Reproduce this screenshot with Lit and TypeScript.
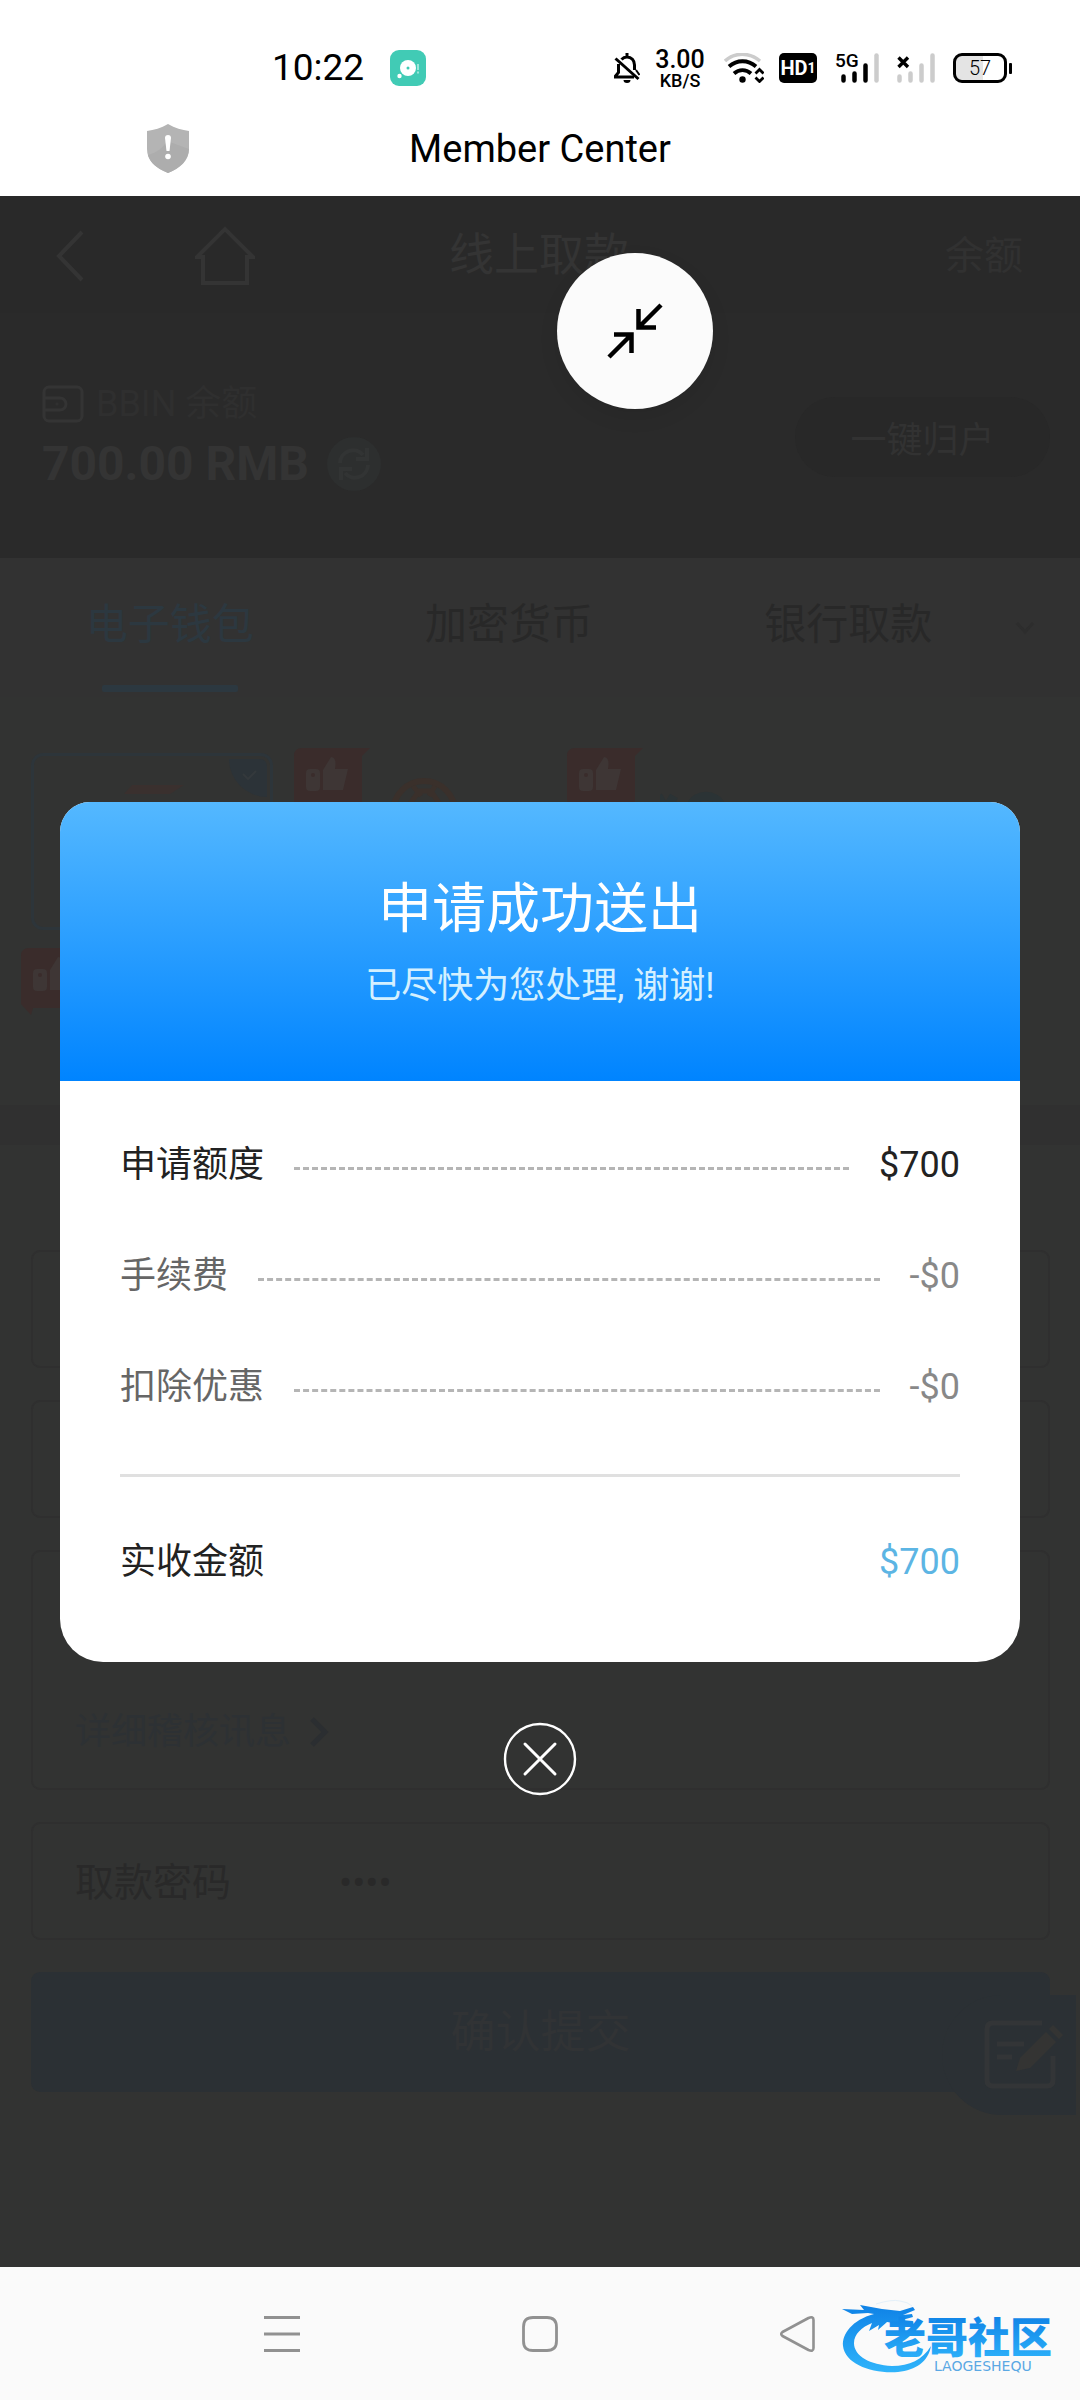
import { LitElement, html, css, svg, nothing } from "lit";
import { customElement, state } from "lit/decorators.js";

const FONT = css`Roboto, "Noto Sans CJK SC", sans-serif`;

/* ---------- Phone status bar ---------- */
@customElement("status-bar")
class StatusBar extends LitElement {
  static styles = css`
    :host {
      display: flex;
      align-items: center;
      justify-content: space-between;
      height: 110px;
      padding: 26px 68px 0 272px;
      box-sizing: border-box;
      background: #fff;
      color: #000;
      font-family: ${FONT};
    }
    .left,
    .right {
      display: flex;
      align-items: center;
    }
    .left {
      gap: 26px;
    }
    .time {
      font-size: 37px;
      line-height: 40px;
    }
    .rate {
      display: flex;
      flex-direction: column;
      align-items: center;
      font-weight: 500;
      margin: 0 18px 0 14px;
      width: 52px;
    }
    .speed {
      font-size: 25px;
      line-height: 25px;
    }
    .unit {
      font-size: 18px;
      line-height: 18px;
    }
    .wifi {
      margin-right: 15px;
    }
    .hd {
      display: flex;
      align-items: center;
      justify-content: center;
      width: 38px;
      height: 30px;
      border-radius: 5px;
      background: #000;
      color: #fff;
      font-size: 20px;
      font-weight: 700;
      margin-right: 18px;
    }
    .sim {
      font-size: 14px;
    }
    .sig {
      margin-right: 18px;
    }
    .battery {
      display: flex;
      align-items: center;
      gap: 2px;
    }
    .cell {
      display: flex;
      align-items: center;
      justify-content: center;
      width: 54px;
      height: 30px;
      box-sizing: border-box;
      border: 3px solid #000;
      border-radius: 9px;
      background: linear-gradient(90deg, #e4e4e4 57%, #fff 57%);
      font-size: 20px;
      font-weight: 300;
    }
    .tip {
      width: 3px;
      height: 11px;
      border-radius: 1px;
      background: #000;
    }
    svg {
      display: block;
    }
  `;

  render() {
    return html`
      <div class="left">
        <span class="time">10:22</span>
        <svg width="36" height="36" viewBox="0 0 36 36" aria-hidden="true">
          <rect width="36" height="36" rx="9" fill="#41cbb5" />
          <circle cx="18" cy="18" r="8" fill="#fff" />
          <circle cx="18" cy="18" r="1.5" fill="#41cbb5" />
          <circle cx="9.500" cy="26" r="2.200" fill="#fff" />
          <path d="M28 14v6M28 21.500v2" stroke="#b5ede3" stroke-width="1.600" />
        </svg>
      </div>
      <div class="right">
        <svg width="26" height="30" viewBox="0 0 26 30" fill="none" stroke="#000" stroke-width="3" aria-hidden="true">
          <path d="M13 0v4M7.500 6.500C9 4.800 11 4 13 4c4.500 0 7.500 3.500 7.500 8v5M4.500 11v8.500L1.500 23v1H20" />
          <path d="M1.500 5.500 24.500 26" />
          <path d="M22 17l3.500 5" stroke-width="2" />
          <path d="M9.500 27h7a3.500 3 0 0 1-7 0z" fill="#000" stroke="none" />
        </svg>
        <div class="rate"><span class="speed">3.00</span><span class="unit">KB/S</span></div>
        <svg class="wifi" width="40" height="30" viewBox="0 0 40 30" fill="none" stroke="#000" aria-hidden="true">
          <path d="M1 8C11-1 25-1 36 8" stroke="#ccc" stroke-width="3.500" />
          <path d="M5 13.500c8-7 19-7 27 0M10 20.500c5-4.500 12-4.500 17 0" stroke-width="3.800" />
          <circle cx="18.500" cy="26.500" r="3.200" fill="#000" stroke="none" />
          <path d="M31.500 20.500 35.500 16.500 39.500 20.500M31.500 24.500 35.500 28.500 39.500 24.500" stroke-width="2.800" />
        </svg>
        <div class="hd"><span>HD</span><span class="sim">1</span></div>
        <svg class="sig" width="44" height="46" viewBox="0 -8 44 46" aria-hidden="true">
          <g stroke-width="4.500" stroke-linecap="round">
            <path d="M8.500 23.500v4M19.500 20.500v7M30.500 12.500v15" stroke="#000" />
            <path d="M41.500 2.500v25" stroke="#ccc" />
          </g>
          <text x="0" y="14" font-size="19" font-weight="500">5G</text>
        </svg>
        <svg class="sig" width="38" height="30" viewBox="0 0 38 30" aria-hidden="true">
          <path d="M2.500 23.500v4M13.500 20.500v7M24.500 12.500v15M35.500 2.500v25" stroke="#ccc" stroke-width="4.500" stroke-linecap="round" />
          <path d="M1.500 4.500 11 14M11 4.500 1.500 14" stroke="#000" stroke-width="3.400" />
        </svg>
        <div class="battery"><span class="cell">57</span><span class="tip"></span></div>
      </div>
    `;
  }
}

/* ---------- Withdrawal page, shown dimmed behind the dialog ---------- */
@customElement("withdraw-page")
class WithdrawPage extends LitElement {
  static styles = css`
    :host {
      display: block;
      --head: #2a2a2a;
      --body: #323232;
      --faint: #343434;
      --dark: #292929;
      --line: #2f2f2f;
      --blue: #2b3034;
      font-family: ${FONT};
      background: #323332;
      color: var(--dark);
      min-height: 100%;
    }
    button,
    input {
      font: inherit;
      color: inherit;
      border: 0;
      background: none;
      padding: 0;
    }
    svg {
      display: block;
    }
    .header {
      display: grid;
      grid-template-columns: 1fr auto 1fr;
      align-items: center;
      height: 117px;
      padding: 2px 57px 0 55px;
      box-sizing: border-box;
      background: #292929;
      color: var(--faint);
    }
    .nav {
      display: flex;
      align-items: center;
      gap: 110px;
    }
    .title {
      margin: 0;
      font-size: 45px;
      font-weight: 400;
      line-height: 56px;
    }
    .header-link {
      justify-self: end;
      font-size: 39px;
      line-height: 56px;
      color: #313131;
      text-decoration: none;
    }
    .balance {
      display: flex;
      justify-content: space-between;
      align-items: center;
      height: 245px;
      padding: 2px 30px 0 42px;
      box-sizing: border-box;
      background: var(--head);
    }
    .wallet {
      display: flex;
      align-items: center;
      gap: 12px;
      font-size: 36px;
      line-height: 44px;
      color: #2f2f2f;
    }
    .amount {
      display: flex;
      align-items: center;
      gap: 18px;
      margin-top: 10px;
      font-size: 48px;
      line-height: 56px;
      font-weight: 700;
      color: var(--faint);
    }
    .collect {
      width: 255px;
      height: 80px;
      border-radius: 40px;
      background: #282828;
      color: #323232;
      font-size: 36px;
    }
    .tabs {
      position: relative;
      display: flex;
      height: 139px;
      padding-right: 62px;
      background: var(--body);
    }
    .tab {
      display: flex;
      flex: 1;
      flex-direction: column;
      align-items: center;
      justify-content: space-between;
      padding: 37px 0 5px;
      font-size: 42px;
      line-height: 60px;
      color: #282828;
    }
    .tab::after {
      content: "";
      width: 136px;
      height: 7px;
      border-radius: 2px;
    }
    .tab.on {
      color: #2c3840;
    }
    .tab.on::after {
      background: #2c3840;
    }
    .more {
      position: absolute;
      right: 0;
      top: 0;
      bottom: 0;
      width: 110px;
      display: grid;
      place-items: center;
      background: #313131;
    }
    .options {
      display: flex;
      flex-wrap: wrap;
      align-content: flex-start;
      gap: 23px 31px;
      height: 408px;
      padding: 56px 30px 0 31px;
      box-sizing: border-box;
    }
    .option {
      position: relative;
      width: 242px;
      height: 177px;
      border: 3px solid transparent;
      border-radius: 12px;
      box-sizing: border-box;
    }
    .option.on {
      border-color: #2d353a;
    }
    .badge {
      position: absolute;
      left: -13px;
      top: -8px;
    }
    .tick {
      position: absolute;
      right: 3px;
      top: 3px;
    }
    .art {
      margin-left: 80px;
    }
    .band {
      height: 40px;
      background: #303030;
    }
    .form {
      display: flex;
      flex-direction: column;
      gap: 32px;
      padding: 105px 30px 0 31px;
    }
    .field {
      display: flex;
      align-items: center;
      height: 118px;
      padding: 4px 42px 0;
      border: 2px solid var(--line);
      border-radius: 9px;
      box-sizing: border-box;
      font-size: 39px;
      line-height: 56px;
    }
    .field.tall {
      align-items: flex-end;
      height: 240px;
      padding-bottom: 28px;
    }
    .audit {
      display: flex;
      align-items: center;
      gap: 18px;
      font-size: 36px;
      color: #2d3134;
      text-decoration: none;
    }
    .pin {
      flex: 1;
      min-width: 0;
      margin-left: 108px;
      font-size: 39px;
      outline: 0;
    }
    .submit {
      height: 120px;
      padding-bottom: 8px;
      border-radius: 9px;
      background: var(--blue);
      color: #313335;
      font-size: 45px;
    }
    .notes {
      position: absolute;
      right: 4px;
      bottom: 152px;
      width: 134px;
      height: 120px;
      border-radius: 60px 0 0 60px;
      background: var(--blue);
      display: flex;
      align-items: center;
      justify-content: flex-end;
      padding-right: 12px;
      box-sizing: border-box;
    }
  `;

  private tabs = ["电子钱包", "加密货币", "银行取款"];

  private badge() {
    return html`<svg class="badge" width="76" height="76" viewBox="0 0 76 76" aria-hidden="true">
      <path d="M8 0H76L68 8V60H12L10 67 0 56V8Q0 0 8 0z" fill="#3a2c2b" />
      <rect x="12" y="21" width="14" height="22" rx="4" fill="#3e3635" />
      <circle cx="19" cy="27" r="2" fill="#3a2c2b" />
      <path d="M29 22 37 9q6 0 4 12h13l-5 21H29z" fill="#3e3635" />
    </svg>`;
  }

  private art(index: number) {
    const drawings = [
      svg`<path d="M10 38 18 29H70L56 38z" fill="#3a302e" />`,
      svg`<g fill="none" stroke="#3a302b"><circle cx="37" cy="56" r="31" stroke-width="6" /><path d="M20 52 32 35H44L54 50M26 30 34 40M48 30 42 40" stroke-width="5" /></g>`,
      svg`<path d="M-2 40 6 54 14 40M60 48A15 12 0 0 0 32 48" fill="none" stroke="#2b3335" stroke-width="9" />`,
    ];
    return html`<svg class="art" width="90" height="90" viewBox="0 0 90 90" aria-hidden="true">${drawings[index] ?? nothing}</svg>`;
  }

  render() {
    return html`
      <header class="header">
        <div class="nav">
          <button aria-label="返回">
            <svg width="30" height="52" viewBox="0 0 30 52" fill="none" stroke="#343434" stroke-width="4"><path d="M27 2 4 26 27 50" /></svg>
          </button>
          <button aria-label="首页">
            <svg width="60" height="60" viewBox="0 0 60 60" fill="none" stroke="#343434" stroke-width="4"><path d="M2 31H8V57H52V31H58L30 3z" /></svg>
          </button>
        </div>
        <h1 class="title">线上取款</h1>
        <a class="header-link" href="#balance">余额</a>
      </header>

      <section class="balance">
        <div>
          <div class="wallet">
            <svg width="42" height="38" viewBox="0 0 42 38" fill="none" stroke="#343434" stroke-width="3">
              <rect x="2" y="2" width="38" height="34" rx="5" />
              <path d="M2 13H18a6 6 0 0 1 0 12H2" />
              <circle cx="15" cy="19" r="1" stroke-width="1" />
            </svg>
            <span>BBIN 余额</span>
          </div>
          <div class="amount">
            <span>700.00 RMB</span>
            <button aria-label="刷新">
              <svg width="54" height="54" viewBox="0 0 54 54">
                <circle cx="27" cy="27" r="27" fill="#2d2f2f" />
                <g fill="none" stroke="#323434" stroke-width="4">
                  <path d="M13 26a13 13 0 0 1 23-8M41 28a13 13 0 0 1-23 8" />
                  <path d="M40 11V22H29M14 43V32H25" />
                </g>
              </svg>
            </button>
          </div>
        </div>
        <button class="collect">一键归户</button>
      </section>

      <nav class="tabs">
        ${this.tabs.map((t, i) => html`<button class="tab ${i === 0 ? "on" : ""}">${t}</button>`)}
        <button class="more" aria-label="更多">
          <svg width="20" height="14" viewBox="0 0 20 14" fill="none" stroke="#2d2d2d" stroke-width="3"><path d="M2 2 10 11 18 2" /></svg>
        </button>
      </nav>

      <section class="options">
        ${[0, 1, 2, 3].map(
          (i) => html`<div class="option ${i === 0 ? "on" : ""}">
            ${i === 0
              ? html`<svg class="tick" width="38" height="38" viewBox="0 0 38 38" aria-hidden="true">
                  <path d="M0 0H30Q38 0 38 8V38A38 38 0 0 1 0 0z" fill="#2c3338" />
                  <path d="M14 15 19 20 27 12" fill="none" stroke="#34393c" stroke-width="2" />
                </svg>`
              : this.badge()}
            ${this.art(i)}
          </div>`
        )}
      </section>
      <div class="band"></div>

      <form class="form" @submit=${(e: Event) => e.preventDefault()}>
        <div class="field"></div>
        <div class="field"></div>
        <div class="field tall">
          <a class="audit" href="#audit">
            <span>详细稽核讯息</span>
            <svg width="20" height="30" viewBox="0 0 20 30" fill="none" stroke="#2b2e31" stroke-width="5"><path d="M3 2 16 15 3 28" /></svg>
          </a>
        </div>
        <div class="field">
          <label for="pin">取款密码</label>
          <input class="pin" id="pin" type="password" value="0000" />
        </div>
        <button class="submit">确认提交</button>
      </form>

      <button class="notes" aria-label="备注">
        <svg width="80" height="70" viewBox="0 0 80 70" fill="none" stroke="#333537" stroke-width="5">
          <path d="M58 3H9Q3 3 3 9V60Q3 66 9 66H63Q69 66 69 60V36" />
          <path d="M13 24H40M13 37H28" />
          <path d="M32 51 36 38 62 12 72 22 46 48z" fill="#343433" stroke="none" />
          <path d="M65 9 69 5 79 15 75 19z" fill="#343433" stroke="none" />
        </svg>
      </button>
    `;
  }
}

/* ---------- Success dialog ---------- */
interface Row {
  label: string;
  value: string;
  strong?: boolean;
}

@customElement("receipt-dialog")
class ReceiptDialog extends LitElement {
  static styles = css`
    :host {
      display: block;
      position: relative;
      margin: 0 60px;
      font-family: ${FONT};
    }
    .card {
      overflow: hidden;
      border-radius: 30px 30px 43px 43px;
      background: #fff;
    }
    .head {
      padding: 68px 40px;
      text-align: center;
      background: linear-gradient(#54b8ff, #0084ff);
    }
    .title {
      margin: 0;
      color: #fff;
      font-size: 54px;
      font-weight: 400;
      line-height: 80px;
    }
    .note {
      margin: 10px 0 0;
      color: #d4f0ff;
      font-size: 36px;
      line-height: 53px;
    }
    .body {
      padding: 29px 60px 44px;
      font-size: 36px;
    }
    .rows,
    .total {
      margin: 0;
    }
    .row {
      display: flex;
      align-items: center;
      height: 111px;
      line-height: 48px;
    }
    .row dt,
    .row dd {
      margin: 0;
      color: #666;
    }
    .row dd {
      color: #888;
    }
    .row.strong dt,
    .row.strong dd {
      color: #222;
    }
    .leader {
      flex: 1;
      margin: 6px 30px 0;
      border-top: 3px dashed #b5b5b5;
    }
    .rows {
      padding-bottom: 31px;
      border-bottom: 3px solid #e0e0e0;
    }
    .total {
      margin-top: 30px;
    }
    .total .row {
      justify-content: space-between;
    }
    .total .row.strong dd {
      color: #5cb5e4;
    }
    .close {
      position: absolute;
      top: 100%;
      left: 50%;
      margin: 60px 0 0 -37px;
      padding: 0;
      border: 0;
      background: none;
    }
    svg {
      display: block;
    }
  `;

  private rows: Row[] = [
    { label: "申请额度", value: "$700", strong: true },
    { label: "手续费", value: "-$0" },
    { label: "扣除优惠", value: "-$0" },
  ];

  render() {
    return html`
      <div class="card" role="dialog" aria-labelledby="done">
        <div class="head">
          <h2 class="title" id="done">申请成功送出</h2>
          <p class="note">已尽快为您处理, 谢谢!</p>
        </div>
        <div class="body">
          <dl class="rows">
            ${this.rows.map(
              (r) => html`<div class="row ${r.strong ? "strong" : ""}">
                <dt>${r.label}</dt>
                <span class="leader"></span>
                <dd>${r.value}</dd>
              </div>`
            )}
          </dl>
          <dl class="total">
            <div class="row strong"><dt>实收金额</dt><dd>$700</dd></div>
          </dl>
        </div>
      </div>
      <button class="close" aria-label="关闭" @click=${() => this.dispatchEvent(new CustomEvent("close"))}>
        <svg width="74" height="74" viewBox="0 0 74 74" fill="none" stroke="#fff" stroke-linecap="round">
          <circle cx="37" cy="37" r="35" stroke-width="2.400" />
          <path d="M22 22 52 52M52 22 22 52" stroke-width="3" />
        </svg>
      </button>
    `;
  }
}

/* ---------- System navigation bar with the site's mark ---------- */
@customElement("system-nav")
class SystemNav extends LitElement {
  static styles = css`
    :host {
      display: block;
      position: relative;
      padding: 0 153px;
      background: #fafafa;
      font-family: ${FONT};
    }
    .keys {
      display: flex;
      height: 133px;
    }
    .key {
      flex: 1;
      display: grid;
      place-items: center;
      padding: 0;
      border: 0;
      background: none;
    }
    svg {
      display: block;
    }
    .mark {
      position: absolute;
      right: 12px;
      bottom: 24px;
      width: 226px;
      height: 80px;
    }
  `;

  render() {
    return html`
      <div class="keys">
        <button class="key" aria-label="Recent apps">
          <svg width="36" height="36" viewBox="0 0 36 36" stroke="#919191" stroke-width="3"><path d="M0 1.500H36M0 18H36M0 34.500H36" /></svg>
        </button>
        <button class="key" aria-label="Home">
          <svg width="36" height="36" viewBox="0 0 36 36" fill="none" stroke="#919191" stroke-width="2.800"><path d="M11 1.500H25Q34.500 1.500 34.500 11V25Q34.500 34.500 25 34.500H11Q1.500 34.500 1.500 25V11Q1.500 1.500 11 1.500z" /></svg>
        </button>
        <button class="key" aria-label="Back">
          <svg width="36" height="36" viewBox="0 0 36 36" fill="none" stroke="#919191" stroke-width="2.600" stroke-linejoin="round"><path d="M2.500 16 28.500 2Q33.500 0 33.500 4V32Q33.500 36 28.500 34L2.500 20Q0 18 2.500 16z" /></svg>
        </button>
      </div>
      <svg class="mark" viewBox="0 0 226 80" role="img" aria-label="老哥社区">
        <defs>
          <linearGradient id="ring" x1="0" y1="0" x2="0" y2="1">
            <stop offset="0" stop-color="#0f82e6" />
            <stop offset="1" stop-color="#2fb4fb" />
          </linearGradient>
        </defs>
        <g transform="translate(0 4)">
          <path
            fill="url(#ring)"
            d="M32 14C10 20 0 34 1 46C3 64 30 74 56 72C74 70 86 62 89 46C80 60 68 66 50 66C28 65 12 56 12 43C12 34 20 27 30 23L27 31 37 25 36 30 45 22 58 24 70 25 71 21 60 20 71 17 70 14 61 15 73 10 71 7 58 11 40 9 18 5 22 10 0 9 10 14 26 13z"
          />
          <path d="M34 4Q50-1 58 1Q66 2 70 6" fill="none" stroke="#e4f0f9" stroke-width="1" />
        </g>
        <text x="42" y="57" font-size="42" font-weight="900" fill="url(#ring)">老哥社区</text>
        <text x="92" y="75" font-size="14" font-family="DejaVu Sans, sans-serif" fill="#5aa8e4">LAOGESHEQU</text>
      </svg>
    `;
  }
}

/* ---------- App ---------- */
@customElement("app-root")
class AppRoot extends LitElement {
  static styles = css`
    :host {
      display: flex;
      flex-direction: column;
      min-height: 100vh;
      font-family: ${FONT};
    }
    .title-bar {
      display: grid;
      grid-template-columns: 1fr auto 1fr;
      align-items: center;
      height: 86px;
      padding: 0 146px 9px;
      box-sizing: border-box;
      background: #fff;
      color: #000;
    }
    .title {
      margin: 0;
      font-size: 38px;
      font-weight: 400;
      line-height: 48px;
    }
    .stage {
      position: relative;
      flex: 1;
      display: grid;
    }
    .stage > * {
      grid-area: 1 / 1;
    }
    .layer {
      position: relative;
      align-self: center;
    }
    .shrink {
      position: absolute;
      left: calc(50% + 17px);
      top: 57px;
      width: 156px;
      height: 156px;
      padding: 0;
      border: 0;
      border-radius: 50%;
      background: #fbfbfb;
      box-shadow: 0 8px 20px rgba(0, 0, 0, 0.08);
      display: grid;
      place-items: center;
    }
    svg {
      display: block;
    }
  `;

  @state() private open = true;

  render() {
    return html`
      <status-bar></status-bar>
      <div class="title-bar">
        <svg width="44" height="49" viewBox="0 0 44 49" aria-hidden="true">
          <path d="M22 0C29 4 36 6 43 7V25C43 36 35 44 22 49C9 44 1 36 1 25V7C8 6 15 4 22 0z" fill="#b4b4b4" />
          <path d="M2 31C10 29 17 24 21 17L43 25C42 37 34 44 22 49C11 44 4 39 2 31z" fill="#adadad" />
          <path d="M22 11q3 0 3 3L23.500 27h-3L19 14q0-3 3-3z" fill="#fff" />
          <circle cx="22" cy="32.500" r="2.800" fill="#fff" />
        </svg>
        <h1 class="title">Member Center</h1>
      </div>
      <main class="stage">
        <withdraw-page></withdraw-page>
        ${this.open
          ? html`<receipt-dialog class="layer" @close=${() => (this.open = false)}></receipt-dialog>`
          : nothing}
        <button class="shrink" aria-label="Exit full screen">
          <svg width="56" height="56" viewBox="0 0 56 56" fill="none" stroke="#000" stroke-width="4.500">
            <path d="M54 2 32 24M31.500 6V24.500H49" />
            <path d="M2 54 24 32M7 31.500H24.500V50" />
          </svg>
        </button>
      </main>
      <system-nav></system-nav>
    `;
  }
}
